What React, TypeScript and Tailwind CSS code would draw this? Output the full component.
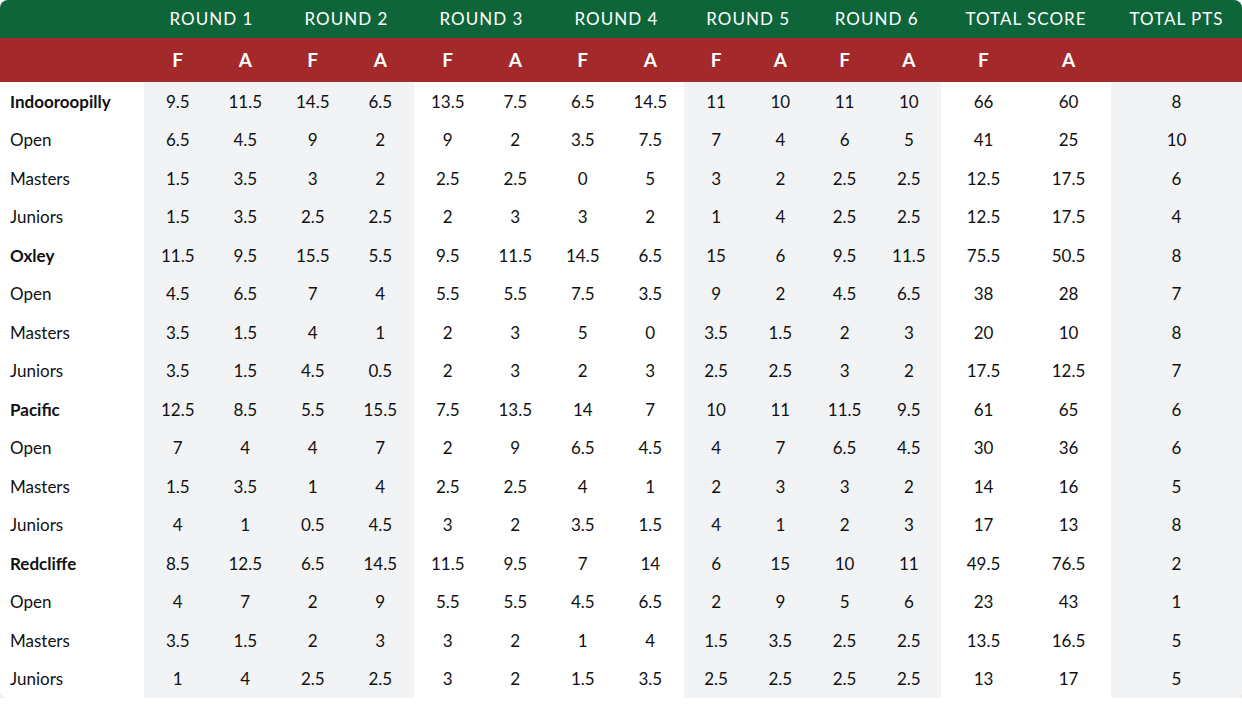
const cols = 'grid grid-cols-[144px_repeat(8,67.5px)_repeat(4,64.25px)_repeat(2,85px)_131px]'

const rounds = ['ROUND 1', 'ROUND 2', 'ROUND 3', 'ROUND 4', 'ROUND 5', 'ROUND 6', 'TOTAL SCORE']

// per data column background (15 value columns)
const colBg = [
  'bg-[#f2f3f5]', 'bg-[#f2f3f5]', 'bg-[#f2f3f5]', 'bg-[#f2f3f5]',
  'bg-white', 'bg-white', 'bg-white', 'bg-white',
  'bg-[#f2f3f5]', 'bg-[#f2f3f5]', 'bg-[#f2f3f5]', 'bg-[#f2f3f5]',
  'bg-white', 'bg-white',
  'bg-[#f2f3f5]',
]

const rows: { name: string; club?: boolean; v: string }[] = [
  { name: 'Indooroopilly', club: true, v: '9.5 11.5 14.5 6.5 13.5 7.5 6.5 14.5 11 10 11 10 66 60 8' },
  { name: 'Open', v: '6.5 4.5 9 2 9 2 3.5 7.5 7 4 6 5 41 25 10' },
  { name: 'Masters', v: '1.5 3.5 3 2 2.5 2.5 0 5 3 2 2.5 2.5 12.5 17.5 6' },
  { name: 'Juniors', v: '1.5 3.5 2.5 2.5 2 3 3 2 1 4 2.5 2.5 12.5 17.5 4' },
  { name: 'Oxley', club: true, v: '11.5 9.5 15.5 5.5 9.5 11.5 14.5 6.5 15 6 9.5 11.5 75.5 50.5 8' },
  { name: 'Open', v: '4.5 6.5 7 4 5.5 5.5 7.5 3.5 9 2 4.5 6.5 38 28 7' },
  { name: 'Masters', v: '3.5 1.5 4 1 2 3 5 0 3.5 1.5 2 3 20 10 8' },
  { name: 'Juniors', v: '3.5 1.5 4.5 0.5 2 3 2 3 2.5 2.5 3 2 17.5 12.5 7' },
  { name: 'Pacific', club: true, v: '12.5 8.5 5.5 15.5 7.5 13.5 14 7 10 11 11.5 9.5 61 65 6' },
  { name: 'Open', v: '7 4 4 7 2 9 6.5 4.5 4 7 6.5 4.5 30 36 6' },
  { name: 'Masters', v: '1.5 3.5 1 4 2.5 2.5 4 1 2 3 3 2 14 16 5' },
  { name: 'Juniors', v: '4 1 0.5 4.5 3 2 3.5 1.5 4 1 2 3 17 13 8' },
  { name: 'Redcliffe', club: true, v: '8.5 12.5 6.5 14.5 11.5 9.5 7 14 6 15 10 11 49.5 76.5 2' },
  { name: 'Open', v: '4 7 2 9 5.5 5.5 4.5 6.5 2 9 5 6 23 43 1' },
  { name: 'Masters', v: '3.5 1.5 2 3 3 2 1 4 1.5 3.5 2.5 2.5 13.5 16.5 5' },
  { name: 'Juniors', v: '1 4 2.5 2.5 3 2 1.5 3.5 2.5 2.5 2.5 2.5 13 17 5' },
]

const App = () => {
  return (
    <div className="bg-white" style={{ fontFamily: 'Lato, "Open Sans", sans-serif' }}>
      <div className="w-[1242px] overflow-hidden rounded-t-lg rounded-b-md bg-white shadow-[0_2px_5px_rgba(0,0,0,0.18)]">
        {/* round headings */}
        <div className={`${cols} h-[38px] items-center bg-[#0f653a] text-[17px] tracking-[0.06em] text-white`}>
          <div />
          {rounds.map((r) => (
            <div key={r} className="col-span-2 text-center">
              {r}
            </div>
          ))}
          <div className="text-center">TOTAL PTS</div>
        </div>

        {/* F / A */}
        <div className={`${cols} h-[44px] items-center bg-[#a3292a] text-[19px] font-bold text-white`}>
          <div />
          {rounds.map((r) => [
            <div key={r + 'f'} className="text-center">F</div>,
            <div key={r + 'a'} className="text-center">A</div>,
          ])}
          <div />
        </div>

        {rows.map((row, i) => (
          <div key={i} className={`${cols} h-[38.5px] text-[17px] text-[#111]`}>
            <div className={`flex items-center pl-[10px] ${row.club ? 'font-bold' : ''}`}>{row.name}</div>
            {row.v.split(' ').map((n, j) => (
              <div key={j} className={`flex items-center justify-center ${colBg[j]}`}>
                {n}
              </div>
            ))}
          </div>
        ))}
      </div>
    </div>
  )
}

export default App
